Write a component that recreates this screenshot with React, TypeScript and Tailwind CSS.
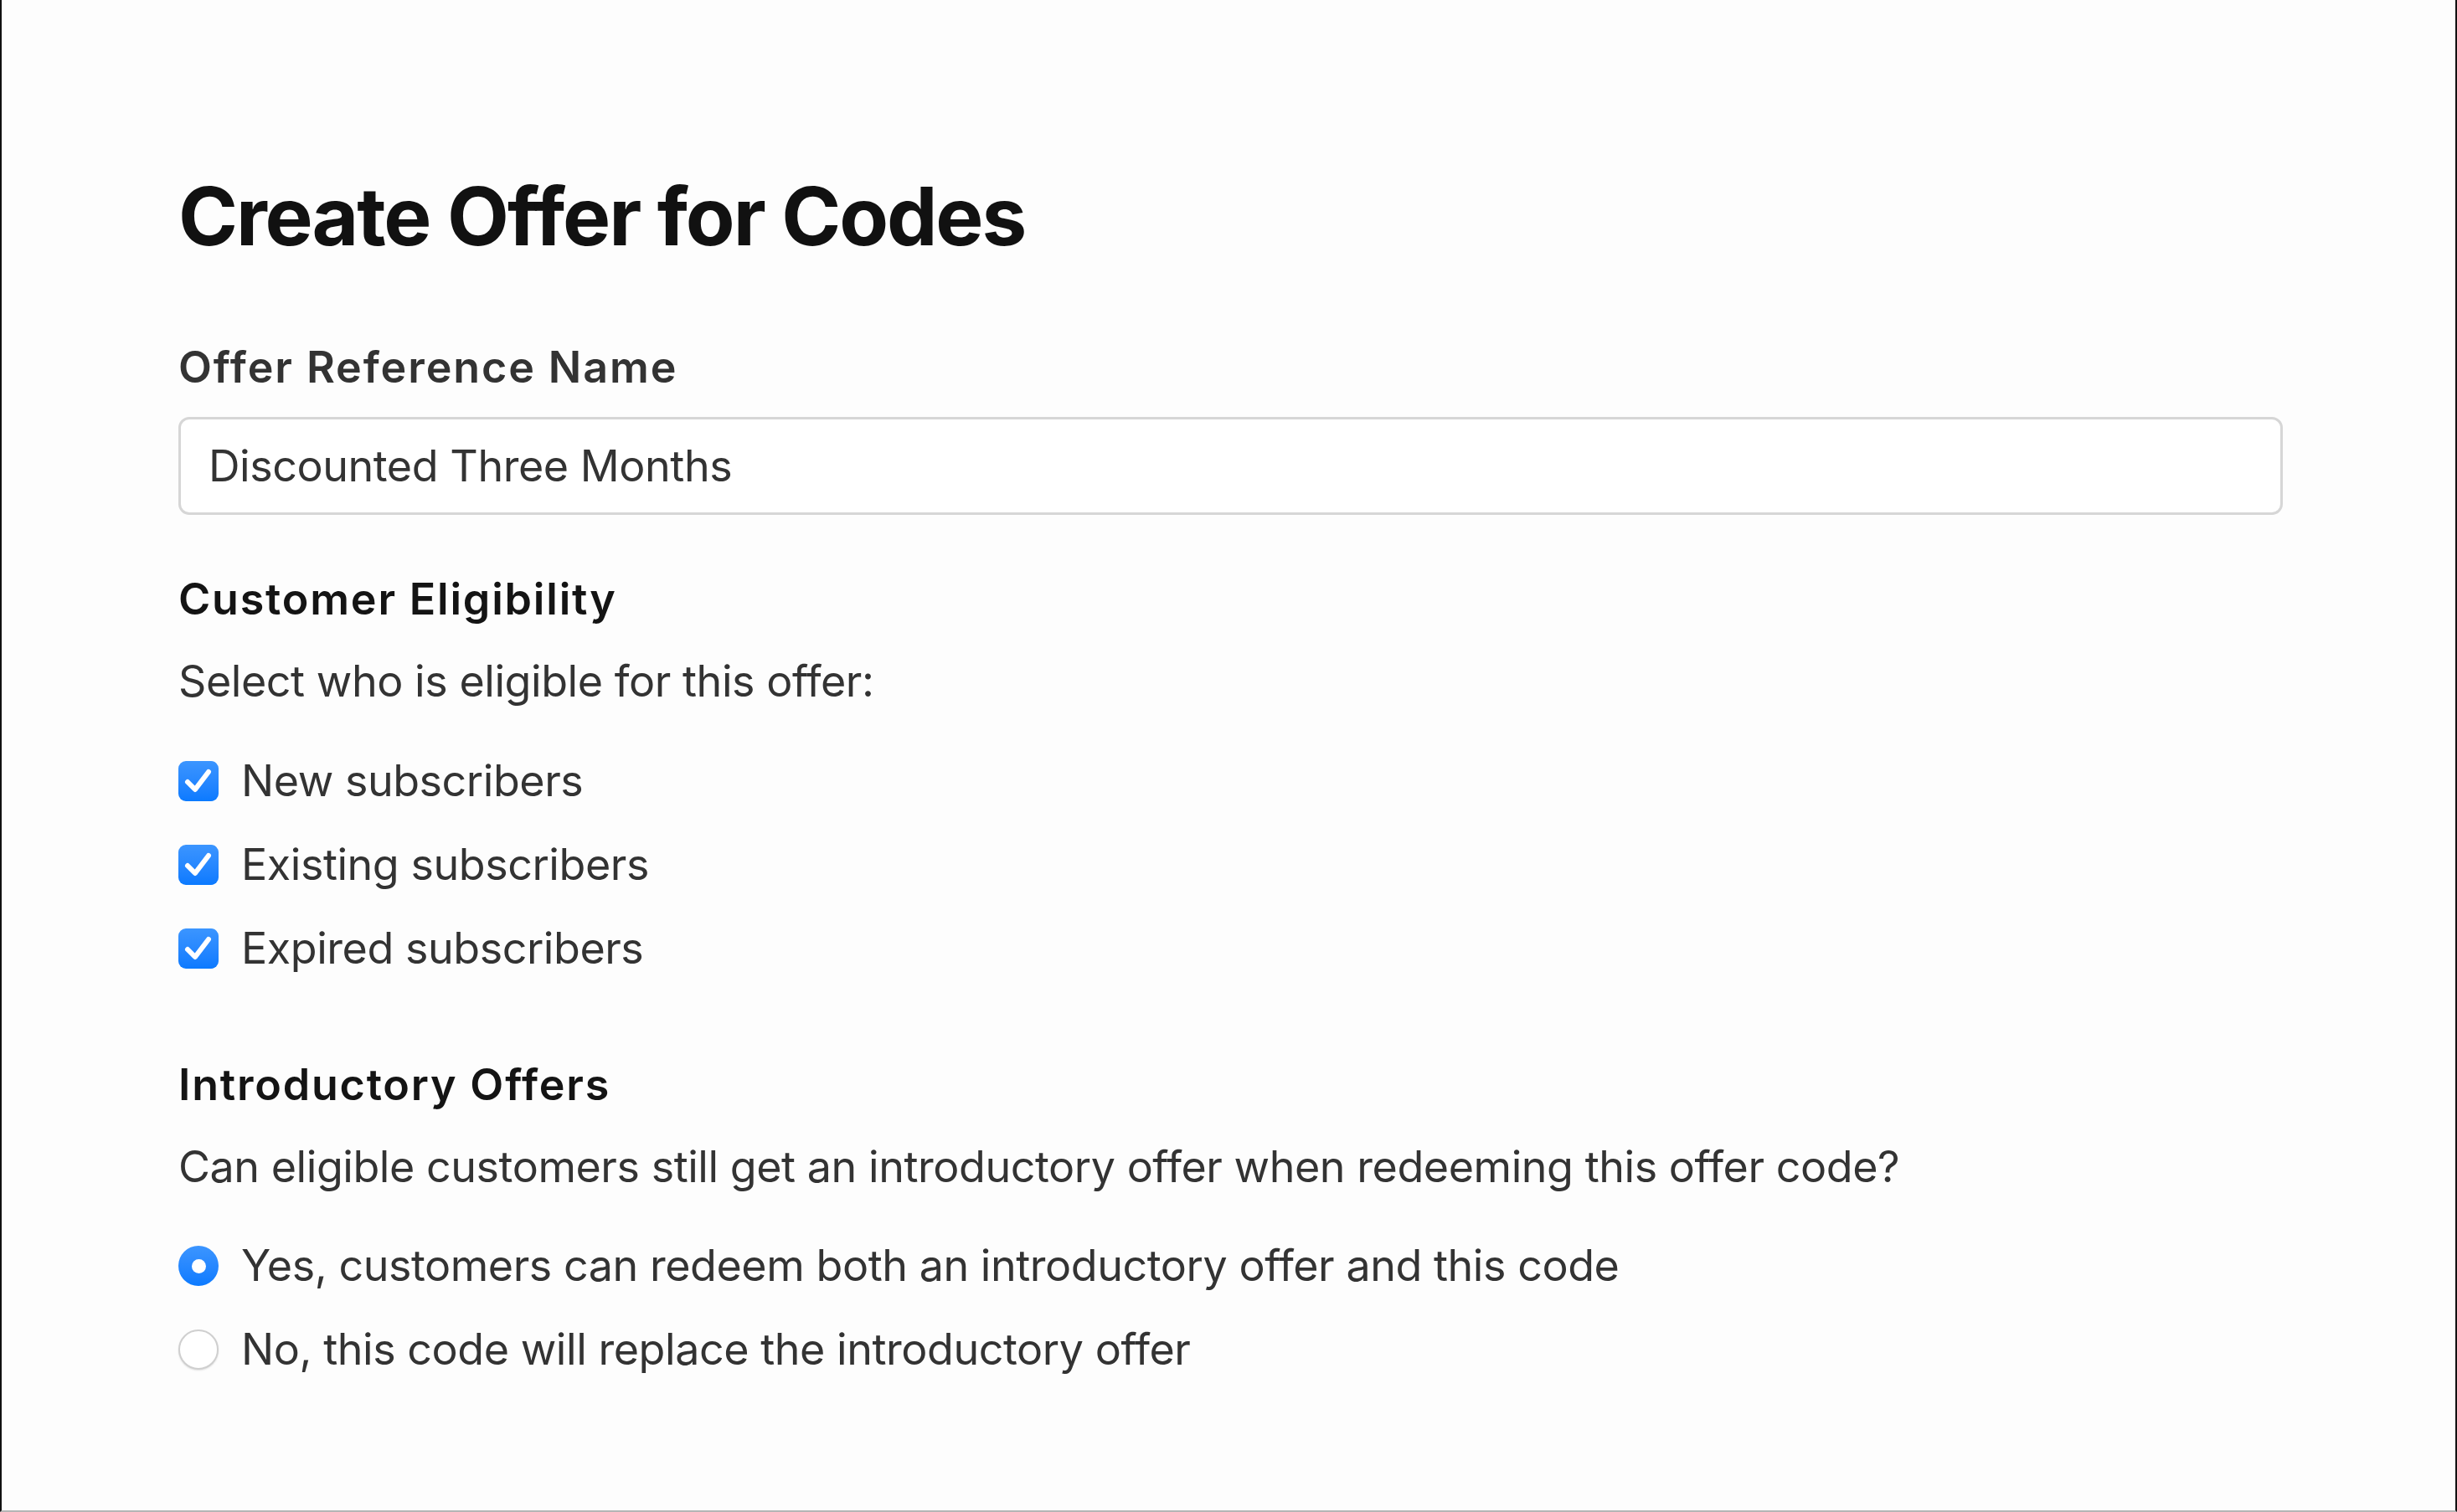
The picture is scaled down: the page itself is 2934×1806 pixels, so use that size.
import { useState } from 'react';

const eligibility = ['New subscribers', 'Existing subscribers', 'Expired subscribers'];

const introOptions = [
  'Yes, customers can redeem both an introductory offer and this code',
  'No, this code will replace the introductory offer',
];

function CheckBox() {
  return (
    <span className="flex h-[48px] w-[48px] shrink-0 items-center justify-center rounded-[9px] bg-linear-to-b from-[#3b95ff] to-[#0a7aff]">
      <svg viewBox="0 0 48 48" className="h-[48px] w-[48px]">
        <path
          d="M11 25 L20 34 L36 13"
          fill="none"
          stroke="#fff"
          strokeWidth="6"
          strokeLinecap="round"
          strokeLinejoin="round"
        />
      </svg>
    </span>
  );
}

function Radio({ on }: { on: boolean }) {
  if (on) {
    return (
      <span className="flex h-[48px] w-[48px] shrink-0 items-center justify-center rounded-full bg-linear-to-b from-[#3b95ff] to-[#0a7aff]">
        <span className="h-[17px] w-[17px] rounded-full bg-white" />
      </span>
    );
  }
  return (
    <span className="h-[48px] w-[48px] shrink-0 rounded-full border-2 border-[#cfcfcf] bg-white shadow-[0_1px_2px_rgba(0,0,0,0.12)]" />
  );
}

export default function App() {
  const [intro, setIntro] = useState(0);

  return (
    <div className="h-[1806px] w-[2934px] border-x-2 border-b-2 border-x-[#111] border-b-[#b5b5b5] bg-[#fdfdfd] font-['Inter','Noto_Sans',sans-serif] tracking-[-0.45px]">
      <div className="pl-[211px] pr-[206px] pt-[200px]">
        {/* Title */}
        <h1 className="text-[96px] font-bold leading-[116px] tracking-[-2.1px] text-[#111]">
          Create Offer for Codes
        </h1>

        {/* Reference name */}
        <div className="mt-[91px] text-[52px] font-semibold leading-[64px] tracking-[1.9px] text-[#333]">
          Offer Reference Name
        </div>
        <div className="mt-[27px] flex h-[117px] items-center rounded-[13px] border-[3px] border-[#d6d6d6] bg-white pl-[33px] text-[52px] leading-[64px] text-[#333]">
          Discounted Three Months
        </div>

        {/* Customer Eligibility */}
        <div className="mt-[69px] text-[52px] font-semibold leading-[64px] tracking-[1.8px] text-[#141414]">
          Customer Eligibility
        </div>
        <div className="mt-[34px] text-[52px] leading-[64px] text-[#333]">
          Select who is eligible for this offer:
        </div>
        <div className="mt-[55px] flex flex-col gap-[36px]">
          {eligibility.map(label => (
            <div key={label} className="flex h-[64px] items-center gap-[27px]">
              <CheckBox />
              <span className="text-[52px] leading-[64px] text-[#333]">{label}</span>
            </div>
          ))}
        </div>

        {/* Introductory Offers */}
        <div className="mt-[99px] text-[52px] font-semibold leading-[64px] tracking-[1.8px] text-[#141414]">
          Introductory Offers
        </div>
        <div className="mt-[34px] text-[52px] leading-[64px] text-[#333]">
          Can eligible customers still get an introductory offer when redeeming this offer code?
        </div>
        <div className="mt-[54px] flex flex-col gap-[36px]">
          {introOptions.map((label, i) => (
            <div
              key={label}
              className="flex h-[64px] cursor-pointer items-center gap-[27px]"
              onClick={() => setIntro(i)}
            >
              <Radio on={intro === i} />
              <span className="text-[52px] leading-[64px] text-[#333]">{label}</span>
            </div>
          ))}
        </div>
      </div>
    </div>
  );
}
